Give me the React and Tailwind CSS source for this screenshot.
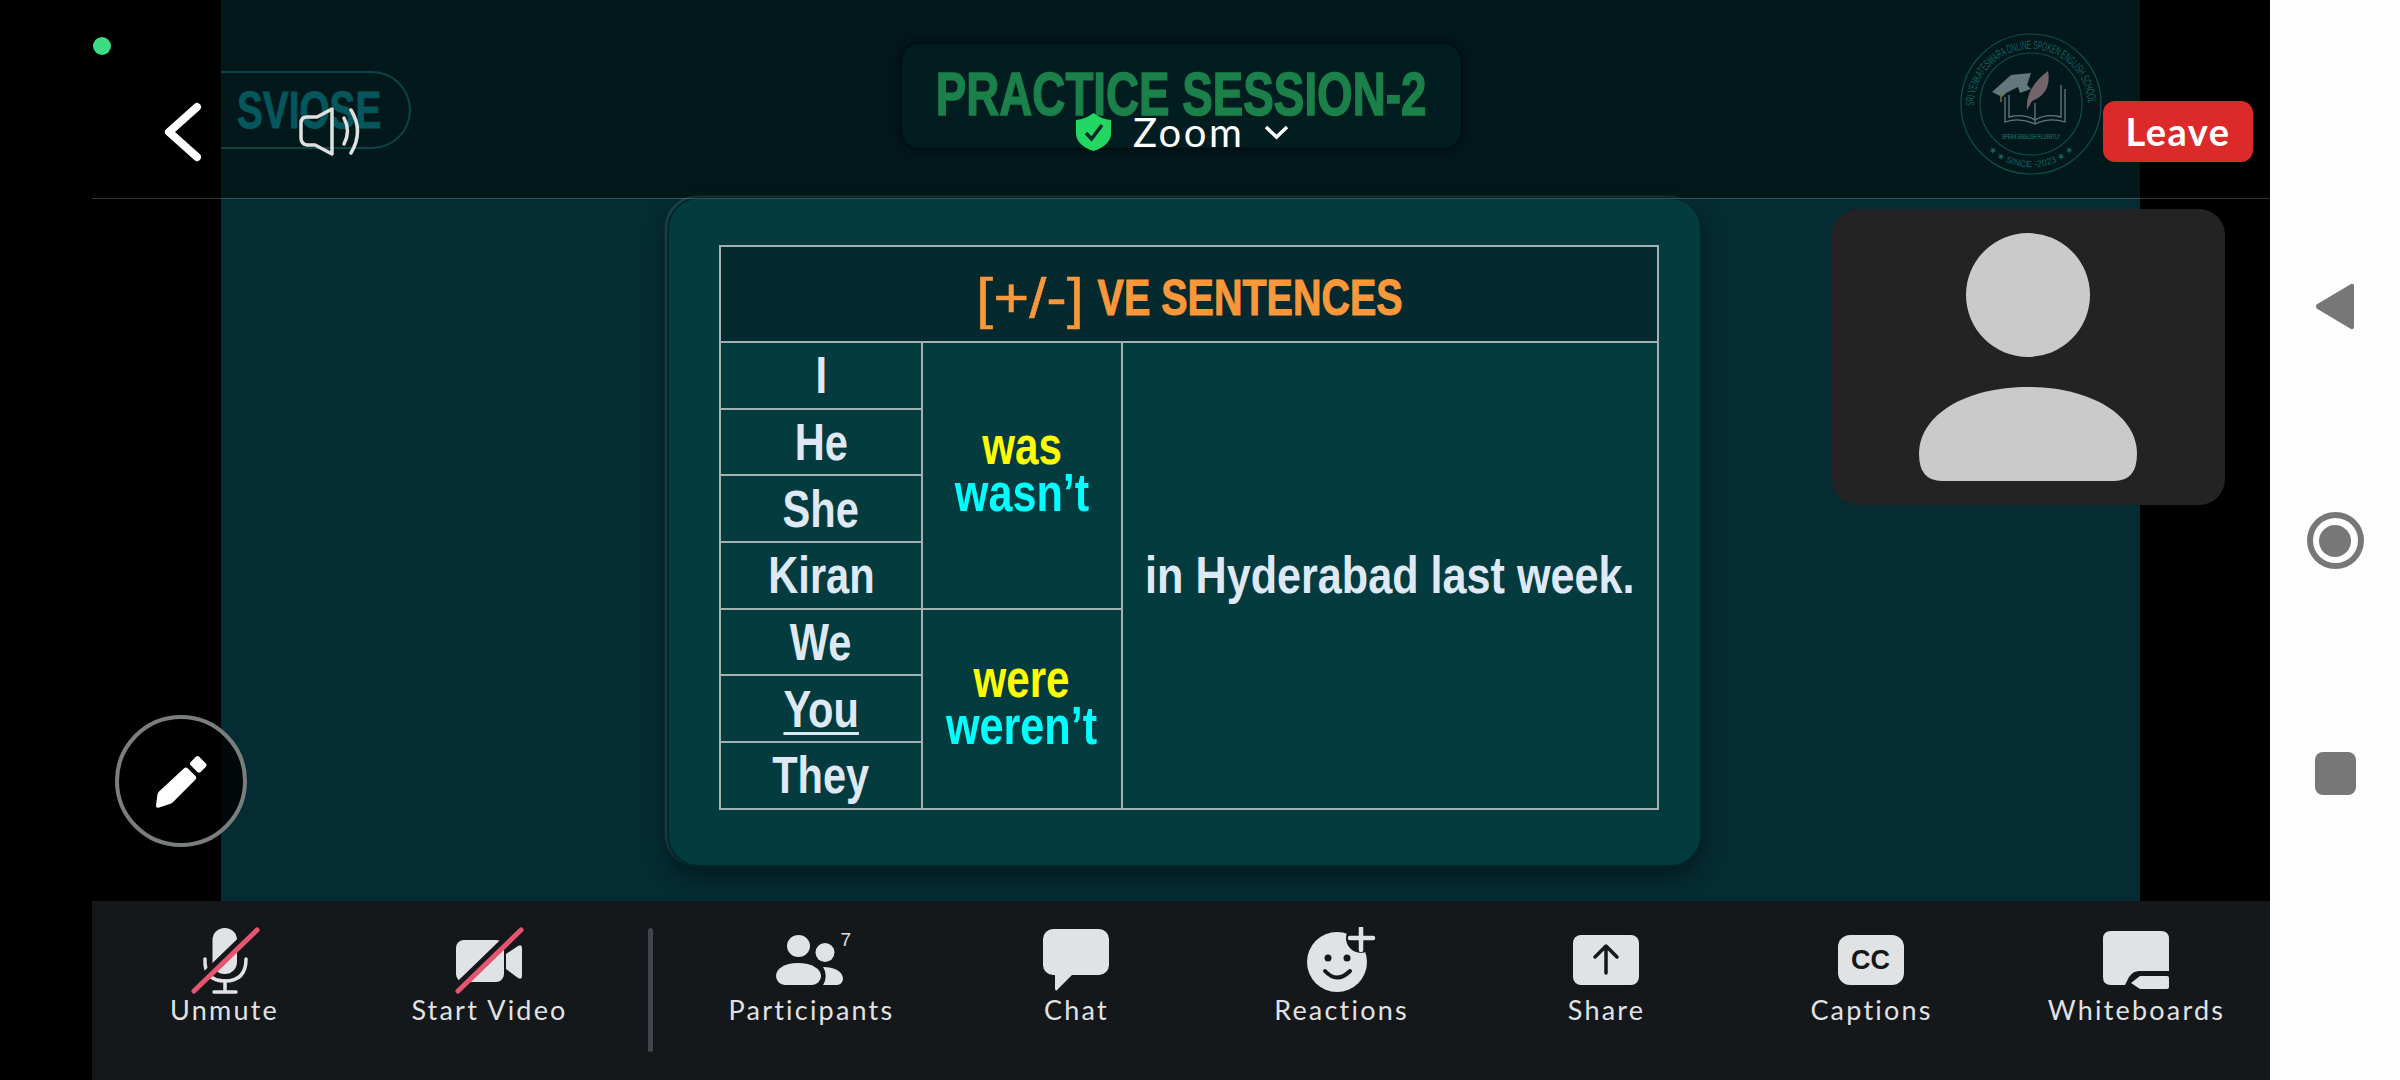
import React from 'react';

const sans = "font-['Liberation_Sans',sans-serif]";
const round = "font-['Lato','Noto_Sans',sans-serif]";

// no condensed face is installed, so the slide's narrow type is squeezed sideways
const Squeeze = ({ className, inner, children }) => (
  <span className={`inline-flex justify-center ${className}`}>
    <span className={`inline-block whitespace-nowrap ${inner}`}>{children}</span>
  </span>
);

const MicIcon = () => (
  <svg width="70" height="70" viewBox="0 0 70 70" fill="none">
    <rect x="22.5" y="1" width="24.5" height="46" rx="12" fill="#e1e2e4" />
    <path d="M15 32 Q14 54 35 54 Q56 54 56 32" stroke="#e1e2e4" strokeWidth="3.5" strokeLinecap="round" />
    <path d="M35 54 V65 M24 65 H46" stroke="#e1e2e4" strokeWidth="3.5" strokeLinecap="round" />
    <path d="M1 61 L64 0" stroke="#14181b" strokeWidth="6" />
    <path d="M4 64 L67 3" stroke="#e4556f" strokeWidth="5" strokeLinecap="round" />
  </svg>
);

const VideoIcon = () => (
  <svg width="70" height="70" viewBox="0 0 70 70" fill="none">
    <rect x="1" y="13" width="48" height="42" rx="8" fill="#e1e2e4" />
    <path d="M51 27 L63 19 Q67 17 67 21 V49 Q67 53 63 51 L51 42 Z" fill="#e1e2e4" />
    <path d="M0 61 L63 0" stroke="#14181b" strokeWidth="6" />
    <path d="M3 64 L66 3" stroke="#e4556f" strokeWidth="5" strokeLinecap="round" />
  </svg>
);

const ParticipantsIcon = () => (
  <svg width="80" height="70" viewBox="0 0 80 70" fill="#e1e2e4">
    <ellipse cx="26.5" cy="19" rx="11.5" ry="11" />
    <ellipse cx="53" cy="25.5" rx="9.5" ry="9.5" />
    <path d="M13 58 A9 9 0 0 1 4 49 C4 42 12 36 26 36 C40 36 49 42 49 49 A9 9 0 0 1 40 58 Z" />
    <path d="M51 40 C62 40 71 44 71 52 A6 6 0 0 1 65 58 H51 C54 54 55 46 51 40 Z" />
  </svg>
);

const ChatIcon = () => (
  <svg className="-ml-[2px]" width="70" height="70" viewBox="0 0 70 70" fill="#e1e2e4">
    <rect x="2" y="2" width="66" height="46" rx="10" />
    <path d="M14 46 V62 Q15 65 17 62 L33 46 Z" />
  </svg>
);

const ReactionsIcon = () => (
  <svg width="76" height="70" viewBox="0 0 76 70" fill="none">
    <circle cx="33" cy="35" r="30" fill="#e1e2e4" />
    <circle cx="57" cy="11" r="15" fill="#14181b" />
    <path d="M57 0 V23 M46 11 H69" stroke="#e1e2e4" strokeWidth="4.5" strokeLinecap="round" />
    <circle cx="24" cy="31" r="3.5" fill="#14181b" />
    <circle cx="43" cy="31" r="3.5" fill="#14181b" />
    <path d="M21 44 Q33 57 46 44" stroke="#14181b" strokeWidth="4" strokeLinecap="round" />
  </svg>
);

const ShareIcon = () => (
  <svg className="-ml-[2px]" width="70" height="70" viewBox="0 0 70 70" fill="none">
    <rect x="2" y="8" width="66" height="50" rx="8" fill="#e1e2e4" />
    <path d="M35 46 V20 M24 30 L35 19 L46 30" stroke="#14181b" strokeWidth="3.5" strokeLinecap="round" strokeLinejoin="round" />
  </svg>
);

const CaptionsIcon = () => (
  <div className={`-ml-[2px] mt-[8px] flex h-[50px] w-[66px] items-center justify-center rounded-[12px] bg-[#e1e2e4] ${sans} text-[27px] leading-none font-bold text-[#14181b]`}>
    CC
  </div>
);

const WhiteboardIcon = () => (
  <svg className="-ml-[2px]" width="70" height="70" viewBox="0 0 70 70" fill="none">
    <path d="M10 4 H60 Q68 4 68 12 V44 H38 Q32 44 28 50 L24 58 H10 Q2 58 2 50 V12 Q2 4 10 4 Z" fill="#e1e2e4" />
    <path d="M39 49 H66 Q68 49 68 51 V60 Q68 62 66 62 H39 L30 56 Z" fill="#e1e2e4" />
  </svg>
);

const tools = [
  { label: 'Unmute', Icon: MicIcon },
  { label: 'Start Video', Icon: VideoIcon },
  { divider: true },
  { label: 'Participants', Icon: ParticipantsIcon, count: 7 },
  { label: 'Chat', Icon: ChatIcon },
  { label: 'Reactions', Icon: ReactionsIcon },
  { label: 'Share', Icon: ShareIcon },
  { label: 'Captions', Icon: CaptionsIcon },
  { label: 'Whiteboards', Icon: WhiteboardIcon },
];

const ToolButton = ({ label, Icon, count }) => (
  <div className="relative flex w-[265px] flex-col items-center pt-[26px]">
    <div className="relative flex h-[70px] items-start justify-center">
      <Icon />
      {count && (
        <span className={`absolute top-[3px] left-[69px] ${sans} text-[19px] leading-none text-[#e1e2e4]`}>{count}</span>
      )}
    </div>
    <span className={`mt-[-4px] ${round} text-[27px] leading-[34px] tracking-[2.2px] whitespace-nowrap text-[#e1e2e4]`}>{label}</span>
  </div>
);

const SchoolLogo = () => (
  <svg width="142" height="142" viewBox="0 0 142 142" fill="none" className="opacity-90">
    <defs>
      <path id="logoTop" d="M14 73 A57 57 0 1 1 128 73" />
      <path id="logoBottom" d="M30 119 A63 63 0 0 0 112 119" />
    </defs>
    <circle cx="71" cy="71" r="70" stroke="#125652" strokeWidth="1.2" />
    <circle cx="71" cy="71" r="51" stroke="#125652" strokeWidth="1.2" />
    <text className={sans} fontSize="12" fill="#1a6a66">
      <textPath href="#logoTop" textLength="176" lengthAdjust="spacingAndGlyphs">SRI VENKATESWARA ONLINE SPOKEN ENGLISH SCHOOL</textPath>
    </text>
    <path d="M32 59 L51 42 L71 40 L67 52 L71 56 L60 60 L58 54 L46 60 L42 64 Z" fill="#6d8486" />
    <path d="M41 60 V69" stroke="#7e7a45" strokeWidth="1.5" />
    <path d="M45 64 V89 Q60 84 75 91 Q90 84 105 89 V56 M49 62 V84 Q64 80 75 87 Q86 80 101 84 V52" stroke="#6f8486" strokeWidth="1.3" />
    <path d="M75 70 V91" stroke="#6f8486" strokeWidth="1.3" />
    <path d="M67 77 Q65 55 88 38 Q92 60 72 68 Z" fill="#806d74" />
    <text x="71" y="106" textAnchor="middle" textLength="58" lengthAdjust="spacingAndGlyphs" className={sans} fontSize="7" fontWeight="700" fill="#1a6a66">SPEAK ENGLISH FLUENTLY</text>
    <text className={sans} fontSize="9" fill="#1a6a66" textAnchor="middle">
      <textPath href="#logoBottom" startOffset="50%">★ ★ ★ SINCE -2023 ★ ★ ★</textPath>
    </text>
  </svg>
);

const subjects = ['He', 'She', 'Kiran', 'We', 'You', 'They'];

const cell = 'border-2 border-[#a3b1b1] p-0 text-center align-middle';

const Subject = ({ name }) => (
  <Squeeze className="w-full" inner={`scale-x-[0.8] text-[52px] leading-none font-bold ${name === 'You' ? 'underline decoration-[3px] underline-offset-[5px]' : ''}`}>
    {name}
  </Squeeze>
);

const Verb = ({ top, bottom }) => (
  <div className="flex flex-col text-[54px] leading-[47px] font-bold">
    <Squeeze className="w-full" inner="scale-x-[0.78] text-[#ffff00]">{top}</Squeeze>
    <Squeeze className="w-full" inner="scale-x-[0.8] text-[#00ffff]">{bottom}</Squeeze>
  </div>
);

const SentenceTable = () => (
  <table className={`w-[938px] table-fixed border-collapse ${sans} text-[#dfe9f6]`}>
    <colgroup>
      <col className="w-[202px]" />
      <col className="w-[200px]" />
      <col className="w-[536px]" />
    </colgroup>
    <tbody>
      <tr className="h-[96px]">
        <td colSpan={3} className={`${cell} bg-[#04292e] text-[#f9983b]`}>
          <div className="flex items-center justify-center gap-[16px] pt-[7px] leading-none">
            <Squeeze className="w-[107px] text-[56px] [-webkit-text-stroke:0.5px_#f9983b]" inner="scale-x-[1.1]">[+/-]</Squeeze>
            <Squeeze className="w-[303px] text-[50px] font-bold [-webkit-text-stroke:1px_#f9983b]" inner="scale-x-[0.79]">VE SENTENCES</Squeeze>
          </div>
        </td>
      </tr>
      <tr className="h-[66.7px]">
        <td className={cell}><Subject name="I" /></td>
        <td rowSpan={4} className={`${cell} pb-[12px]`}>
          <Verb top="was" bottom="wasn’t" />
        </td>
        <td rowSpan={7} className={cell}>
          <Squeeze className="w-full" inner="scale-x-[0.83] text-[52px] font-bold">in Hyderabad last week.</Squeeze>
        </td>
      </tr>
      {subjects.map((name, i) => (
        <tr key={name} className="h-[66.7px]">
          <td className={cell}><Subject name={name} /></td>
          {i === 3 && (
            <td rowSpan={3} className={`${cell} pb-[13px]`}>
              <Verb top="were" bottom="weren’t" />
            </td>
          )}
        </tr>
      ))}
    </tbody>
  </table>
);

const SharedScreen = () => (
  <div className="flex w-[1919px] flex-col bg-[#052c32]">
    {/* slide header, dimmed by the meeting bar */}
    <div className="flex h-[198px] items-start bg-[#02181b]">
      <div className="mt-[71px] flex h-[78px] w-[190px] items-center rounded-r-[39px] border-y-2 border-r-2 border-[#0a4548] pl-[16px]">
        <span className={`inline-block origin-left scale-x-[0.76] ${sans} text-[51px] leading-none font-bold text-[#05575c] [-webkit-text-stroke:1px_#05575c]`}>SVIOSE</span>
      </div>
      <div className="mt-[42px] ml-[489px] flex h-[108px] w-[563px] justify-center rounded-[20px] border-2 border-[#010f11] bg-[#021d20] pt-[19px] shadow-[0_0_12px_rgba(0,0,0,0.4)]">
        <Squeeze className={`w-full ${sans} text-[61px] leading-[62px] font-bold text-[#1b8049] [-webkit-text-stroke:1.5px_#1b8049]`} inner="scale-x-[0.75]">PRACTICE SESSION-2</Squeeze>
      </div>
      <div className="mt-[33px] ml-[497px]">
        <SchoolLogo />
      </div>
    </div>
    <div className="flex-1">
      <div className="mt-[-1px] ml-[446px] h-[670px] w-[1035px] rounded-[32px] border-2 border-[#03262a] bg-[#033b3f] pt-[46px] pl-[50px] shadow-[0_10px_22px_rgba(0,0,0,0.4),-2px_-1px_2px_rgba(120,170,170,0.3)]">
        <SentenceTable />
      </div>
    </div>
  </div>
);

const Toolbar = () => (
  <div className="ml-[92px] flex h-[179px] items-start bg-[#14181b]">
    {tools.map((tool, i) =>
      tool.divider ? (
        <div key={i} className="mx-[26px] mt-[27px] h-[124px] w-[5px] rounded-full bg-[#42454d]" />
      ) : (
        <ToolButton key={tool.label} {...tool} />
      ),
    )}
  </div>
);

const Overlays = () => (
  <>
    <div className="absolute top-[198px] left-[92px] h-[1px] w-[2178px] bg-white/20" />
    <div className="absolute top-[37px] left-[93px] h-[18px] w-[18px] rounded-full bg-[#3ddc84]" />

    <svg className="absolute top-[100px] left-[160px]" width="44" height="64" viewBox="0 0 44 64" fill="none">
      <path d="M37 7 L9 32 L37 57" stroke="#fff" strokeWidth="8" strokeLinecap="round" strokeLinejoin="round" />
    </svg>

    <svg className="absolute top-[107px] left-[299px]" width="64" height="50" viewBox="0 0 64 50" fill="none" stroke="#e0e0e0" strokeWidth="3.5" strokeLinecap="round" strokeLinejoin="round">
      <path d="M33 2 L18 10 H8 Q2 10 2 16 V31 Q2 37 8 38 H16 L33 47 Z" />
      <path d="M45 11 Q52 24 45 37" />
      <path d="M52 3 Q65 24 52 46" />
    </svg>

    <div className="absolute top-[113px] left-[1076px] flex h-[38px] items-center">
      <svg width="35" height="38" viewBox="0 0 35 38">
        <path d="M17.5 0 Q25 6 35 7 V20 Q35 32 17.5 38 Q0 32 0 20 V7 Q10 6 17.5 0 Z" fill="#22d862" />
        <path d="M10 20 L15.5 26 L26 12" fill="none" stroke="#04282a" strokeWidth="3.5" />
      </svg>
      <span className={`ml-[22px] ${round} text-[40px] leading-none tracking-[2.5px] text-white`}>Zoom</span>
      <svg className="ml-[20px]" width="25" height="16" viewBox="0 0 25 16" fill="none">
        <path d="M2 3 L12.5 13 L23 3" stroke="#fff" strokeWidth="3.5" />
      </svg>
    </div>

    <button className={`absolute top-[101px] left-[2103px] h-[61px] w-[150px] rounded-[12px] bg-[#dc2a2a] ${round} text-[38px] font-bold tracking-[1.5px] text-white`}>
      Leave
    </button>

    <div className="absolute top-[209px] left-[1832px] h-[296px] w-[393px] overflow-hidden rounded-[26px] bg-[#232323]">
      <svg width="393" height="296" viewBox="0 0 393 296">
        <circle cx="196" cy="86" r="62" fill="#cbcacb" />
        <path d="M110 272 Q87 272 87 245 C87 205 135 178 196 178 C257 178 305 205 305 245 Q305 272 282 272 Z" fill="#cbcacb" />
      </svg>
    </div>

    <div className="absolute top-[715px] left-[115px] flex h-[132px] w-[132px] items-center justify-center rounded-full border-4 border-[#7b7e7e] bg-black/80">
      <svg width="57" height="57" viewBox="190 180 170 170" fill="#fff">
        <path d="M208 295 L282 226 Q288 220 294 226 L316 248 Q322 254 316 260 L250 326 Q246 330 240 332 L206 343 Q198 345 199 336 L203 305 Q204 299 208 295 Z" />
        <rect x="304" y="196" width="42" height="36" rx="7" transform="rotate(45 325 214)" />
      </svg>
    </div>
  </>
);

const NavBar = () => (
  <div className="flex w-[130px] flex-col items-center bg-[#fefefe] pt-[283px]">
    <svg className="ml-[-1px]" width="40" height="47" viewBox="0 0 40 44" preserveAspectRatio="none">
      <path d="M36 1 Q39 0 39 3 V41 Q39 44 36 43 L2 24 Q0 22 2 20 Z" fill="#777" />
    </svg>
    <div className="mt-[182px] flex h-[57px] w-[57px] items-center justify-center rounded-full border-[6px] border-[#777]">
      <div className="h-[32px] w-[32px] rounded-full bg-[#777]" />
    </div>
    <div className="mt-[183px] h-[43px] w-[41px] rounded-[8px] bg-[#777]" />
  </div>
);

export default function App() {
  return (
    <div className="relative flex h-[1080px] w-[2400px] overflow-hidden bg-black">
      <div className="flex w-[2270px] flex-col">
        <div className="flex h-[901px] pl-[221px]">
          <SharedScreen />
        </div>
        <Toolbar />
      </div>
      <NavBar />
      <Overlays />
    </div>
  );
}
